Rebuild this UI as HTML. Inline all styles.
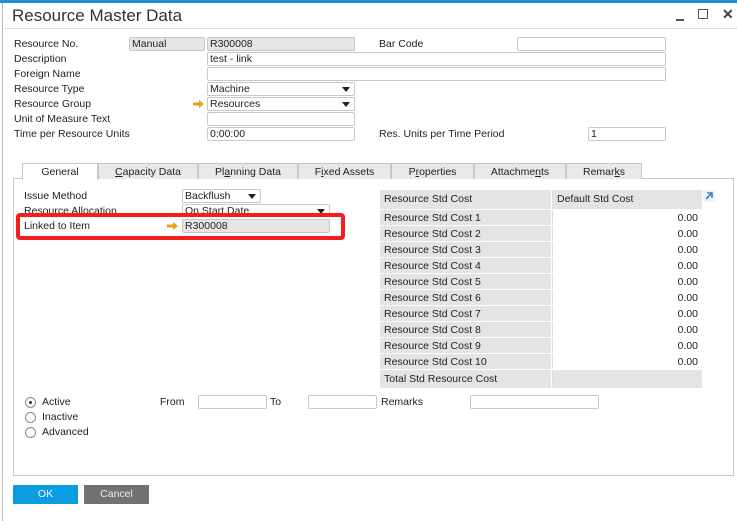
<!DOCTYPE html>
<html><head><meta charset="utf-8"><style>
*{box-sizing:border-box;margin:0;padding:0}
body{width:737px;height:521px;background:#fff;position:relative;overflow:hidden;font-family:"Liberation Sans",sans-serif;font-size:10.5px;color:#222}
.a{position:absolute;white-space:nowrap}
.f{position:absolute;height:14px;border:1px solid #c8c8c8;border-radius:2px;background:#fff;padding-left:2px;line-height:13px}
.g{background:#e6e6e6}
.dd::after{content:"";position:absolute;right:4px;top:4px;border-left:4px solid transparent;border-right:4px solid transparent;border-top:5px solid #222}
.l{position:absolute;line-height:15px}
.arr{position:absolute;width:11px;height:8px}
.tab{position:absolute;top:163px;height:16px;border:1px solid #c8c8c8;border-bottom:none;background:#e9e9e9;text-align:center;line-height:16px}
.row{position:absolute;left:380px;width:322px;height:16px;border-bottom:1px solid #fff}
.row .c1{position:absolute;left:0;width:171px;height:15px;background:#e4e4e4;padding-left:4px;line-height:16px}
.row .c2{position:absolute;left:172px;width:150px;height:15px;background:#fff;text-align:right;padding-right:4px;line-height:16px;border-left:1px solid #ddd}
.rad{position:absolute;width:11px;height:11px;border:1px solid #888;border-radius:50%;background:#fff}
</style></head><body>
<div class="a" style="left:0;top:0;width:737px;height:3px;background:#1e8fd8"></div>
<div class="a" style="left:2px;top:3px;width:1px;height:518px;background:#bbb"></div>
<div class="a" style="left:12px;top:6px;font-size:17px;color:#333">Resource Master Data</div>
<div class="a" style="left:5px;top:28px;width:732px;height:1px;background:#ddd"></div>
<div class="a" style="left:676px;top:19px;width:8px;height:2px;background:#555"></div>
<div class="a" style="left:698px;top:9px;width:10px;height:10px;border:1.5px solid #555"></div>
<div class="a" style="left:722px;top:6px;font-size:14px;font-weight:bold;color:#444">✕</div>

<div class="l" style="left:14px;top:37px">Resource No.</div>
<div class="f g" style="left:129px;top:37px;width:76px">Manual</div>
<div class="f g" style="left:207px;top:37px;width:148px">R300008</div>
<div class="l" style="left:379px;top:37px">Bar Code</div>
<div class="f" style="left:517px;top:37px;width:149px"></div>
<div class="l" style="left:14px;top:52px">Description</div>
<div class="f" style="left:207px;top:52px;width:459px">test - link</div>
<div class="l" style="left:14px;top:67px">Foreign Name</div>
<div class="f" style="left:207px;top:67px;width:459px"></div>
<div class="l" style="left:14px;top:82px">Resource Type</div>
<div class="f dd" style="left:207px;top:82px;width:148px">Machine</div>
<div class="l" style="left:14px;top:97px">Resource Group</div>
<svg class="arr" style="left:193px;top:100px" viewBox="0 0 11 8"><path d="M0 2.5H6V0L11 4 6 8V5.5H0Z" fill="#e8a21a"/></svg>
<div class="f dd" style="left:207px;top:97px;width:148px">Resources</div>
<div class="l" style="left:14px;top:112px">Unit of Measure Text</div>
<div class="f" style="left:207px;top:112px;width:148px"></div>
<div class="l" style="left:14px;top:127px">Time per Resource Units</div>
<div class="f" style="left:207px;top:127px;width:148px">0:00:00</div>
<div class="l" style="left:379px;top:127px">Res. Units per Time Period</div>
<div class="f" style="left:588px;top:127px;width:78px">1</div>

<div class="a" style="left:13px;top:178px;width:721px;height:298px;border:1px solid #c8c8c8"></div>
<div class="tab" style="left:22px;width:76px;background:#fff;height:17px">General</div>
<div class="tab" style="left:98px;width:100px"><u>C</u>apacity Data</div>
<div class="tab" style="left:198px;width:100px">Pl<u>a</u>nning Data</div>
<div class="tab" style="left:298px;width:93px">F<u>i</u>xed Assets</div>
<div class="tab" style="left:391px;width:83px">P<u>r</u>operties</div>
<div class="tab" style="left:474px;width:92px">Attachme<u>n</u>ts</div>
<div class="tab" style="left:566px;width:76px">Remar<u>k</u>s</div>

<div class="l" style="left:24px;top:189px">Issue Method</div>
<div class="f dd" style="left:182px;top:189px;width:79px">Backflush</div>
<div class="l" style="left:24px;top:204px">Resource Allocation</div>
<div class="f dd" style="left:182px;top:204px;width:148px">On Start Date</div>
<div class="a" style="left:16px;top:213px;width:329px;height:27px;border:4px solid #f51d1d;border-radius:4px;background:#fff"></div>
<div class="l" style="left:24px;top:219px">Linked to Item</div>
<svg class="arr" style="left:167px;top:222px" viewBox="0 0 11 8"><path d="M0 2.5H6V0L11 4 6 8V5.5H0Z" fill="#e8a21a"/></svg>
<div class="f g" style="left:182px;top:219px;width:148px">R300008</div>

<div class="row" style="top:190px;height:20px"><div class="c1" style="height:19px;line-height:19px">Resource Std Cost</div><div class="c2" style="height:19px;line-height:19px;background:#e4e4e4;text-align:left;padding-left:4px">Default Std Cost</div></div>
<div class="row" style="top:210px"><div class="c1">Resource Std Cost 1</div><div class="c2">0.00</div></div>
<div class="row" style="top:226px"><div class="c1">Resource Std Cost 2</div><div class="c2">0.00</div></div>
<div class="row" style="top:242px"><div class="c1">Resource Std Cost 3</div><div class="c2">0.00</div></div>
<div class="row" style="top:258px"><div class="c1">Resource Std Cost 4</div><div class="c2">0.00</div></div>
<div class="row" style="top:274px"><div class="c1">Resource Std Cost 5</div><div class="c2">0.00</div></div>
<div class="row" style="top:290px"><div class="c1">Resource Std Cost 6</div><div class="c2">0.00</div></div>
<div class="row" style="top:306px"><div class="c1">Resource Std Cost 7</div><div class="c2">0.00</div></div>
<div class="row" style="top:322px"><div class="c1">Resource Std Cost 8</div><div class="c2">0.00</div></div>
<div class="row" style="top:338px"><div class="c1">Resource Std Cost 9</div><div class="c2">0.00</div></div>
<div class="row" style="top:354px"><div class="c1">Resource Std Cost 10</div><div class="c2">0.00</div></div>
<div class="row" style="top:370px;height:18px"><div class="c1" style="height:18px;line-height:18px">Total Std Resource Cost</div><div class="c2" style="height:18px;background:#e4e4e4"></div></div>
<svg class="a" style="left:703px;top:190px" width="12" height="12" viewBox="0 0 12 12"><rect width="12" height="12" fill="#eef3f8"/><path d="M3 9L9 3M4 3H9V8" stroke="#3a7fc4" stroke-width="1.6" fill="none"/></svg>

<div class="rad" style="left:25px;top:397px"><div style="position:absolute;left:3px;top:3px;width:3px;height:3px;border-radius:50%;background:#333"></div></div>
<div class="l" style="left:42px;top:395px">Active</div>
<div class="rad" style="left:25px;top:412px"></div>
<div class="l" style="left:42px;top:410px">Inactive</div>
<div class="rad" style="left:25px;top:427px"></div>
<div class="l" style="left:42px;top:425px">Advanced</div>
<div class="l" style="left:160px;top:395px">From</div>
<div class="f" style="left:198px;top:395px;width:69px"></div>
<div class="l" style="left:270px;top:395px">To</div>
<div class="f" style="left:308px;top:395px;width:69px"></div>
<div class="l" style="left:381px;top:395px">Remarks</div>
<div class="f" style="left:470px;top:395px;width:129px"></div>

<div class="a" style="left:13px;top:485px;width:65px;height:19px;background:#0b9be0;color:#fff;text-align:center;line-height:19px">OK</div>
<div class="a" style="left:84px;top:485px;width:65px;height:19px;background:#727272;color:#eee;text-align:center;line-height:19px">Cancel</div>
</body></html>
